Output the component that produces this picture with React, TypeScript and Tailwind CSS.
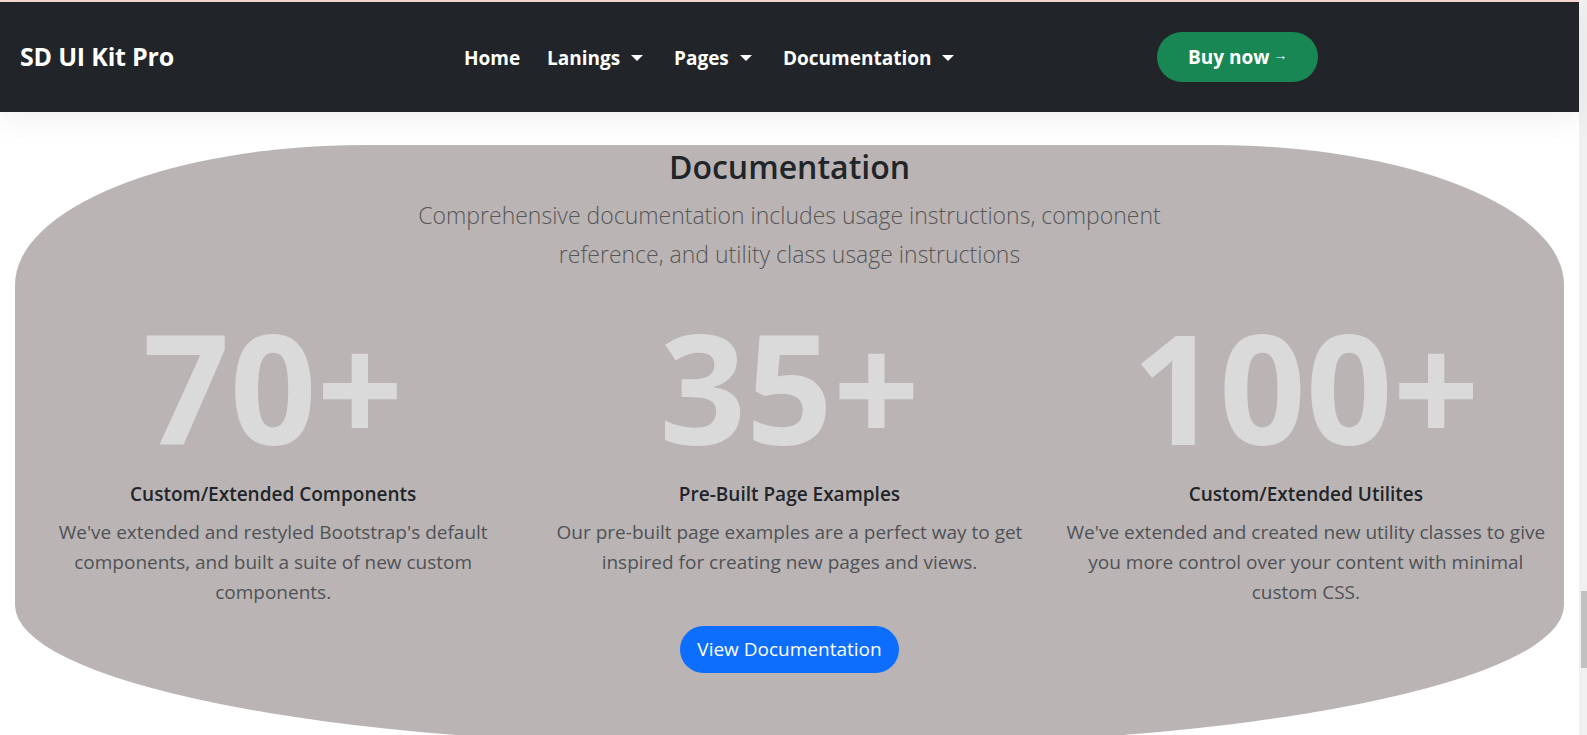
import React from 'react';

const navItems = [
  { label: 'Home', width: 'w-[83px]', caret: false },
  { label: 'Lanings', width: 'w-[127px]', caret: true },
  { label: 'Pages', width: 'w-[109px]', caret: true },
  { label: 'Documentation', width: '', caret: true },
];

const features = [
  {
    stat: '70+',
    title: 'Custom/Extended Components',
    lines: ["We've extended and restyled Bootstrap's default", 'components, and built a suite of new custom', 'components.'],
  },
  {
    stat: '35+',
    title: 'Pre-Built Page Examples',
    lines: ['Our pre-built page examples are a perfect way to get', 'inspired for creating new pages and views.'],
  },
  {
    stat: '100+',
    title: 'Custom/Extended Utilites',
    lines: ["We've extended and created new utility classes to give", 'you more control over your content with minimal', 'custom CSS.'],
  },
];

const Caret = () => (
  <span className="ml-[11px] inline-block h-0 w-0 border-x-[6px] border-t-[6px] border-x-transparent border-t-white" />
);

export default function App() {
  return (
    <div className="flex h-[735px] w-full overflow-hidden bg-white font-['Open_Sans',sans-serif]">
      <div className="flex w-[1579px] shrink-0 flex-col">
        {/* thin top strip */}
        <div className="h-[2px] shrink-0 bg-[#f6d6cf]" />

        {/* Navbar */}
        <header className="relative z-10 flex h-[110px] shrink-0 items-center bg-[#212529] shadow-[0_10px_28px_rgba(0,0,0,0.06)]">
          <div className="w-[464px] pl-5 text-[25px] font-bold tracking-[-0.2px] text-white">SD UI Kit Pro</div>
          <nav className="flex w-[693px] items-center pt-[2px] text-[19px] font-bold text-white">
            {navItems.map((item) => (
              <a key={item.label} href="#" className={`flex items-center ${item.width}`}>
                <span>{item.label}</span>
                {item.caret && <Caret />}
              </a>
            ))}
          </nav>
          <a
            href="#"
            className="flex h-[50px] w-[161px] items-center rounded-full bg-[#198754] pl-[31px] text-[19px] font-bold text-white"
          >
            Buy now
            <span className="ml-[4px] -translate-y-[2px] text-[14px] font-bold leading-none">→</span>
          </a>
        </header>

        {/* Documentation section */}
        <main className="flex-1 pt-[33px]">
          <section className="mx-[15px] h-[600px] rounded-[350px_350px_700px_700px/140px_140px_140px_140px] bg-[#bab4b4] pt-[3px] text-center">
            <h2 className="text-[32px] font-semibold leading-[1.2] text-[#212529]">Documentation</h2>
            <p className="mt-[10px] text-[23px] font-light leading-[38.4px] text-[#575757]">
              <span className="block">Comprehensive documentation includes usage instructions, component</span>
              <span className="block">reference, and utility class usage instructions</span>
            </p>

            <div className="mt-[38px] grid grid-cols-3">
              {features.map((f) => (
                <div key={f.title} className="px-3">
                  <div className="text-[152px] font-bold leading-none text-[#dadada]">{f.stat}</div>
                  <h5 className="mt-[19px] text-[19px] font-semibold leading-[24px] text-[#212529]">{f.title}</h5>
                  <p className="mt-[11px] text-[19px] leading-[30px] text-[#4f5257]">
                    {f.lines.map((l) => (
                      <span key={l} className="block whitespace-nowrap">
                        {l}
                      </span>
                    ))}
                  </p>
                </div>
              ))}
            </div>

            <div className="mt-[19px] flex justify-center">
              <a
                href="#"
                className="flex h-[47px] items-center rounded-full bg-[#0d6efd] px-[17px] text-[19px] text-white"
              >
                View Documentation
              </a>
            </div>
          </section>
        </main>
      </div>

      {/* scrollbar */}
      <div className="w-[8px] shrink-0 bg-[#f0f0f0]">
        <div className="ml-[2px] mt-[591px] h-[77px] w-[6px] bg-[#c1c1c1]" />
      </div>
    </div>
  );
}
